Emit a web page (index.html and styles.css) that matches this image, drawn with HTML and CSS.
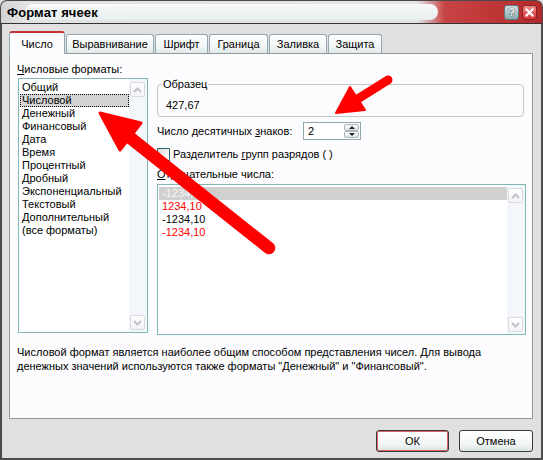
FILE: index.html
```html
<!DOCTYPE html>
<html lang="ru">
<head>
<meta charset="utf-8">
<title>Формат ячеек</title>
<link rel="stylesheet" href="styles.css">
</head>
<body>
<div class="window">
  <div class="titlebar">
    <span class="title">Формат ячеек</span>
    <div class="tb-buttons">
      <span class="tb-btn help">?</span>
      <span class="tb-btn close">
        <svg width="9" height="9" viewBox="0 0 9 9"><path d="M1.5 1.5 L7.5 7.5 M7.5 1.5 L1.5 7.5" stroke="#fff" stroke-width="2.2" stroke-linecap="square"/></svg>
      </span>
    </div>
  </div>
  <div class="client">
    <div class="tabs">
      <div class="tab active w-num">Число</div>
      <div class="tab w-align">Выравнивание</div>
      <div class="tab w-font">Шрифт</div>
      <div class="tab w-border">Граница</div>
      <div class="tab w-fill">Заливка</div>
      <div class="tab w-prot">Защита</div>
    </div>
    <div class="panel">
      <div class="panel-main">
        <div class="col-left">
          <div class="label"><u>Ч</u>исловые форматы:</div>
          <div class="listbox formats">
            <div class="items">
              <div class="item">Общий</div>
              <div class="item selected focus">Числовой</div>
              <div class="item">Денежный</div>
              <div class="item">Финансовый</div>
              <div class="item">Дата</div>
              <div class="item">Время</div>
              <div class="item">Процентный</div>
              <div class="item">Дробный</div>
              <div class="item">Экспоненциальный</div>
              <div class="item">Текстовый</div>
              <div class="item">Дополнительный</div>
              <div class="item">(все форматы)</div>
            </div>
            <div class="scrollbar">
              <span class="sb-btn"><svg width="9" height="6" viewBox="0 0 9 6"><path d="M1 5 L4.5 1.5 L8 5" fill="none" stroke="#c4c2cc" stroke-width="2"/></svg></span>
              <span class="sb-btn"><svg width="9" height="6" viewBox="0 0 9 6"><path d="M1 1 L4.5 4.5 L8 1" fill="none" stroke="#c4c2cc" stroke-width="2"/></svg></span>
            </div>
          </div>
        </div>
        <div class="col-right">
          <fieldset class="sample">
            <legend>Образец</legend>
            <div class="sample-value">427,67</div>
          </fieldset>
          <div class="decimals">
            <span class="dec-label">Число десятичных <u>з</u>наков:</span>
            <div class="spin">
              <span class="spin-val">2</span>
              <div class="spin-btns">
                <span class="spin-btn up"></span>
                <span class="spin-btn down"></span>
              </div>
            </div>
          </div>
          <div class="check-row">
            <span class="checkbox"></span>
            <span>Разделитель <u>г</u>рупп разрядов ( )</span>
          </div>
          <div class="label neg-label"><u>О</u>трицательные числа:</div>
          <div class="listbox negatives">
            <div class="items">
              <div class="item selected inactive">-1234,10</div>
              <div class="item red">1234,10</div>
              <div class="item">-1234,10</div>
              <div class="item red">-1234,10</div>
            </div>
            <div class="scrollbar">
              <span class="sb-btn"><svg width="9" height="6" viewBox="0 0 9 6"><path d="M1 5 L4.5 1.5 L8 5" fill="none" stroke="#c4c2cc" stroke-width="2"/></svg></span>
              <span class="sb-btn"><svg width="9" height="6" viewBox="0 0 9 6"><path d="M1 1 L4.5 4.5 L8 1" fill="none" stroke="#c4c2cc" stroke-width="2"/></svg></span>
            </div>
          </div>
        </div>
      </div>
      <p class="desc">Числовой формат является наиболее общим способом представления чисел. Для вывода<br>денежных значений используются также форматы "Денежный" и "Финансовый".</p>
    </div>
    <div class="buttons">
      <button class="btn ok">ОК</button>
      <button class="btn cancel">Отмена</button>
    </div>
  </div>
  <svg class="annot" width="543" height="460" viewBox="0 0 543 460">
    <line x1="269" y1="248" x2="128" y2="136" stroke="#ff0000" stroke-width="12.5" stroke-linecap="round"/>
    <polygon points="100,113 141,123 120,150" fill="#ff0000" stroke="#ff0000" stroke-width="3" stroke-linejoin="round"/>
    <line x1="388" y1="80" x2="356" y2="100" stroke="#ff0000" stroke-width="9" stroke-linecap="round"/>
    <polygon points="336,113 365,110 350,87" fill="#ff0000" stroke="#ff0000" stroke-width="2" stroke-linejoin="round"/>
  </svg>
</div>
</body>
</html>
```
FILE: styles.css
```css
* { box-sizing: border-box; }
html, body { margin: 0; padding: 0; }
body {
  width: 543px;
  height: 460px;
  overflow: hidden;
  background: #e0e0e0;
  font-family: "Liberation Sans", Arial, sans-serif;
  font-size: 11px;
  line-height: 13px;
  color: #000;
}
u { text-decoration: underline; text-underline-offset: 1px; }

.window {
  position: relative;
  width: 543px;
  height: 460px;
  display: flex;
  flex-direction: column;
  background: #e0e0e0;
}

/* title bar */
.titlebar {
  position: relative;
  height: 24px;
  flex: none;
  display: flex;
  align-items: center;
  justify-content: space-between;
  padding: 1px 5px 0 6px;
  border: 1px solid #4a4a4a;
  border-bottom-color: #333;
  border-radius: 7px 7px 0 0;
  background: linear-gradient(to right, #d2d2d2 0, #e2e2e2 4%, #e4e4e4 77%, #c84444 82%, #b42a2a 100%);
}
.titlebar::before {
  content: "";
  position: absolute;
  left: 24px;
  right: 104px;
  top: 3px;
  bottom: 3px;
  border-radius: 9px;
  background: linear-gradient(#f7fafa, #e8eeee);
}
.title {
  position: relative;
  font-weight: bold;
  font-size: 13px;
  letter-spacing: 0.1px;
}
.tb-buttons {
  position: relative;
  display: flex;
  gap: 3px;
  margin-top: -1px;
}
.tb-btn {
  width: 15px;
  height: 15px;
  border-radius: 3px;
  display: flex;
  align-items: center;
  justify-content: center;
  font-weight: bold;
  font-size: 11px;
  line-height: 11px;
}
.help {
  background: linear-gradient(#d0dfe1, #8caaae);
  border: 1px solid #5d7c80;
  color: #fff;
  text-shadow: 0 0 1px #2f4448, 0 0 1px #2f4448;
}
.close {
  background: linear-gradient(#f28a8a, #d23434);
  border: 1px solid #8e2020;
}

/* client area */
.client {
  flex: 1;
  display: flex;
  flex-direction: column;
  padding: 7px 8px 0 7px;
  border: 2px solid #4c4c4c;
  border-top: 0;
}

.tabs {
  display: flex;
  align-items: flex-end;
  height: 23px;
  gap: 1px;
}
.tab {
  height: 19px;
  margin-bottom: 1px;
  border: 1px solid #91a7b4;
  border-bottom: 0;
  border-radius: 3px 3px 0 0;
  background: linear-gradient(#ffffff, #f4f7f7 55%, #e0e9e9);
  display: flex;
  align-items: center;
  justify-content: center;
  white-space: nowrap;
}
.tab.active {
  position: relative;
  z-index: 1;
  height: 23px;
  margin-bottom: 0;
  padding-top: 2px;
  background: #fcfcfe;
  border-top: 2px solid #c43434;
  border-color: #c43434 #91a7b4 #91a7b4 #91a7b4;
}
.w-num { width: 56px; }
.w-align { width: 88px; }
.w-font { width: 53px; }
.w-border { width: 59px; }
.w-fill { width: 58px; }
.w-prot { width: 54px; }

.panel {
  margin-top: -1px;
  height: 366px;
  border: 1px solid #919b9c;
  background: #fcfcfe;
  padding: 9px 7px 0 7px;
}
.panel-main {
  display: flex;
  gap: 9px;
}
.col-left { width: 131px; }
.col-right { width: 369px; }

.label { height: 13px; white-space: nowrap; }

.listbox {
  display: flex;
  border: 1px solid #82b5b5;
  background: #fff;
}
.formats {
  margin: 2px 0 0 1px;
  width: 130px;
  height: 255px;
}
.negatives {
  margin-top: 3px;
  width: 369px;
  height: 151px;
}
.items {
  flex: 1;
  padding: 2px 0 0 1px;
  overflow: hidden;
}
.item {
  height: 13px;
  line-height: 13px;
  padding-left: 2px;
  white-space: nowrap;
}
.item.selected { background: #d4d4d4; }
.item.focus { outline: 1px dotted #000; outline-offset: -1px; }
.item.inactive { background: #d0d0d0; color: #f6f6f6; padding-left: 3px; }
.item.red { color: #ff0000; }
.negatives .item { padding-left: 3px; }

.scrollbar {
  width: 18px;
  flex: none;
  background: #f3f7fb;
  display: flex;
  flex-direction: column;
  justify-content: space-between;
  padding: 3px 2px 2px 1px;
}
.sb-btn {
  width: 15px;
  height: 15px;
  border: 1px solid #dcd8e0;
  border-radius: 2px;
  background: linear-gradient(#ffffff, #f3f2f6);
  display: flex;
  align-items: center;
  justify-content: center;
}

.sample {
  margin: 15px 2px 0 0;
  padding: 8px 8px 4px 8px;
  border: 1px solid #c6c6c6;
  border-radius: 4px;
  min-width: 0;
}
.sample legend {
  padding: 0 1px;
  margin-left: -4px;
  line-height: 13px;
}
.sample-value { height: 13px; }

.decimals {
  margin-top: 5px;
  height: 18px;
  display: flex;
  align-items: center;
}
.dec-label { width: 146px; white-space: nowrap; }
.spin {
  width: 58px;
  height: 18px;
  border: 1px solid #8ea6ae;
  background: #fff;
  display: flex;
  justify-content: space-between;
  align-items: center;
  padding: 0 1px 0 4px;
}
.spin-btns {
  display: flex;
  flex-direction: column;
  width: 15px;
  height: 14px;
}
.spin-btn {
  flex: 1;
  border: 1px solid #a9b5bd;
  border-radius: 2px;
  background: linear-gradient(#fbfbfb, #dde4e8);
  display: flex;
  align-items: center;
  justify-content: center;
}
.spin-btn::after {
  content: "";
  width: 0;
  height: 0;
  border-left: 3px solid transparent;
  border-right: 3px solid transparent;
}
.spin-btn.up::after { border-bottom: 3px solid #222; }
.spin-btn.down::after { border-top: 3px solid #222; }

.check-row {
  margin-top: 8px;
  height: 13px;
  display: flex;
  align-items: center;
  gap: 3px;
  white-space: nowrap;
}
.checkbox {
  width: 13px;
  height: 13px;
  flex: none;
  border: 1px solid #2e6e6e;
  background: linear-gradient(135deg, #d6d6d6, #f4f4f4 60%, #ffffff);
}
.neg-label { margin-top: 7px; }

.desc {
  margin: 10px 0 0 0;
  line-height: 14px;
  white-space: nowrap;
}

.buttons {
  margin-top: 11px;
  display: flex;
  justify-content: flex-end;
  gap: 10px;
}
.btn {
  height: 22px;
  padding: 0;
  border: 1px solid #3a3a3a;
  border-radius: 3px;
  background: linear-gradient(#ffffff, #f3f6f6 65%, #d9e3e3);
  font-family: "Liberation Sans", Arial, sans-serif;
  font-size: 11px;
  color: #000;
}
.ok { width: 73px; box-shadow: inset 0 0 0 1px #d86464; }
.cancel { width: 74px; }

.annot {
  position: absolute;
  left: 0;
  top: 0;
  pointer-events: none;
}
```
